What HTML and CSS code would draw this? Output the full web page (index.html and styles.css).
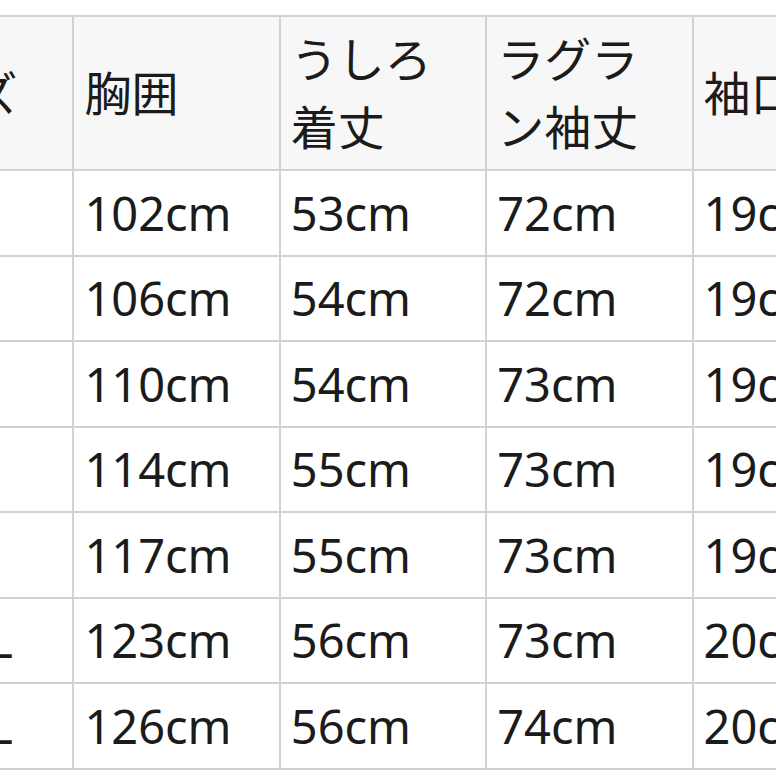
FILE: index.html
```html
<!DOCTYPE html>
<html lang="ja">
<head>
<meta charset="utf-8">
<title>サイズ表</title>
<link rel="stylesheet" href="styles.css">
</head>
<body>
<div class="wrap">
<table class="size-table">
  <colgroup>
    <col class="c"><col class="c"><col class="c"><col class="c"><col class="c">
  </colgroup>
  <thead>
    <tr><th>サイズ</th><th>胸囲</th><th>うしろ着丈</th><th>ラグラン袖丈</th><th>袖口</th></tr>
  </thead>
  <tbody>
    <tr><td>S</td><td>102cm</td><td>53cm</td><td>72cm</td><td>19cm</td></tr>
    <tr><td>M</td><td>106cm</td><td>54cm</td><td>72cm</td><td>19cm</td></tr>
    <tr><td>L</td><td>110cm</td><td>54cm</td><td>73cm</td><td>19cm</td></tr>
    <tr><td>XL</td><td>114cm</td><td>55cm</td><td>73cm</td><td>19cm</td></tr>
    <tr><td>XXL</td><td>117cm</td><td>55cm</td><td>73cm</td><td>19cm</td></tr>
    <tr><td>XXXXL</td><td>123cm</td><td>56cm</td><td>73cm</td><td>20cm</td></tr>
    <tr><td>XXXXL</td><td>126cm</td><td>56cm</td><td>74cm</td><td>20cm</td></tr>
  </tbody>
</table>
</div>
</body>
</html>
```
FILE: styles.css
```css
html, body {
  margin: 0;
  padding: 0;
  background: #ffffff;
  overflow: hidden;
}
.wrap {
  width: 776px;
  height: 776px;
  overflow: hidden;
  padding-top: 15px;
  box-sizing: border-box;
}
.size-table {
  border-collapse: collapse;
  table-layout: fixed;
  width: 1034px;
  margin-left: -134px;
  font-family: "Noto Sans", "Open Sans", "Noto Sans CJK JP", sans-serif;
  font-size: 47px;
  line-height: 68.5px;
  color: #1b1b1b;
}
.size-table .c {
  width: 20%;
}
.size-table th,
.size-table td {
  border: 2px solid #d2d2d2;
  padding: 7.5px 10px;
  text-align: left;
  vertical-align: middle;
  font-weight: normal;
}
.size-table th {
  background: #f7f7f7;
}
.size-table td {
  background: #ffffff;
}
```
